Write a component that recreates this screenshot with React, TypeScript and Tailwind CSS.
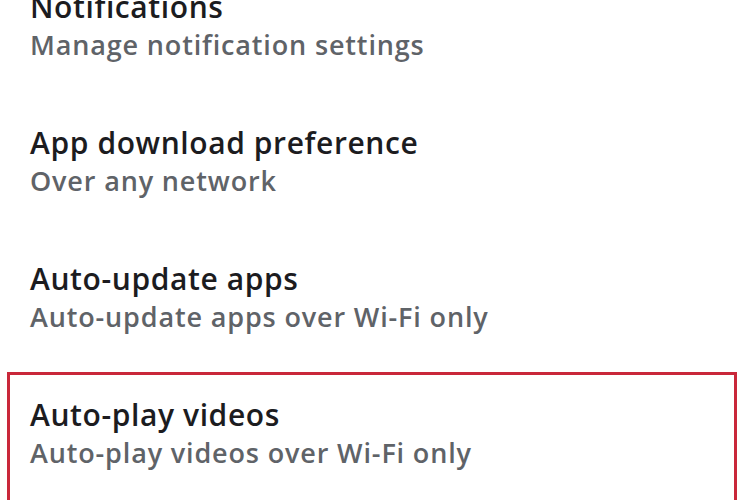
import React from "react";

const items = [
  { title: "Notifications", sub: "Manage notification settings" },
  { title: "App download preference", sub: "Over any network" },
  { title: "Auto-update apps", sub: "Auto-update apps over Wi-Fi only" },
  { title: "Auto-play videos", sub: "Auto-play videos over Wi-Fi only", hl: true },
];

function Texts({ title, sub }: { title: string; sub: string }) {
  return (
    <>
      <div className="text-[30px] leading-[40px] font-semibold tracking-[0.6px] text-[#1c1c1f]">{title}</div>
      <div className="text-[27px] leading-[36px] font-semibold tracking-[0.85px] text-[#5f6368]">{sub}</div>
    </>
  );
}

export default function App() {
  return (
    <div
      className="w-[750px] h-[500px] overflow-hidden bg-white"
      style={{ fontFamily: '"Open Sans", "Liberation Sans", sans-serif' }}
    >
      <div className="-mt-[36px] flex flex-col">
        {items.map((it) =>
          it.hl ? (
            <div
              key={it.title}
              className="ml-[7px] w-[730px] h-[136px] border-[3px] border-[#c9283a] pl-[20px] pt-[20px]"
            >
              <Texts title={it.title} sub={it.sub} />
            </div>
          ) : (
            <div key={it.title} className="h-[136px] pl-[30px] pt-[23px]">
              <Texts title={it.title} sub={it.sub} />
            </div>
          )
        )}
      </div>
    </div>
  );
}
